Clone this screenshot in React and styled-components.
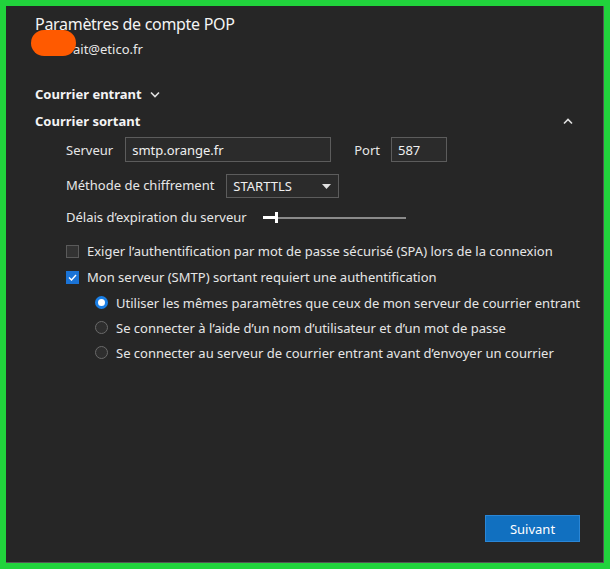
import React, { useState } from 'react';
import styled, { createGlobalStyle } from 'styled-components';

const GlobalStyle = createGlobalStyle`
  html, body {
    margin: 0;
    padding: 0;
    background: #21d33c;
  }
  body {
    font-family: 'Noto Sans', 'Open Sans', sans-serif;
  }
`;

const Frame = styled.div`
  width: 610px;
  height: 569px;
  box-sizing: border-box;
  padding: 6px;
  background: #21d33c;
`;

const Panel = styled.div`
  position: relative;
  height: 100%;
  box-sizing: border-box;
  background: #262626;
  border-right: 1px solid #555;
  border-bottom: 1px solid #555;
  color: #f0f0f0;
  padding: 7px 23px 20px 29px;
  display: flex;
  flex-direction: column;
`;

const Title = styled.h1`
  margin: 0;
  font-size: 16px;
  font-weight: 400;
  letter-spacing: -0.3px;
  line-height: 22px;
  color: #f4f4f4;
`;

const Email = styled.div`
  position: relative;
  margin-top: 5px;
  padding-left: 38px;
  font-size: 13px;
  line-height: 18px;
  color: #e8e8e8;
`;

const Blob = styled.span`
  position: absolute;
  left: -4px;
  top: -10px;
  width: 45px;
  height: 26px;
  border-radius: 13px;
  background: #ff5a00;
`;

const SectionHeader = styled.div`
  display: flex;
  align-items: center;
  gap: 8px;
  margin-top: ${({ first }) => (first ? '27px' : '9px')};
  font-size: 13px;
  font-weight: 700;
  line-height: 18px;
  color: #f4f4f4;
`;

const Spacer = styled.div`
  flex: 1;
`;

const ChevronWrap = styled.span`
  display: flex;
  margin-right: ${({ mr }) => mr || 0}px;
`;

const Body = styled.div`
  display: flex;
  flex-direction: column;
  padding-left: 31px;
  margin-top: 7px;
`;

const Row = styled.div`
  display: flex;
  align-items: center;
  height: 25px;
  margin-bottom: ${({ mb }) => mb || 0}px;
  font-size: 13px;
  color: #e6e6e6;
`;

const Label = styled.span`
  margin-left: ${({ ml }) => ml || 0}px;
  margin-right: ${({ mr }) => mr}px;
  white-space: nowrap;
`;

const TextBox = styled.div`
  box-sizing: border-box;
  width: ${({ w }) => w}px;
  height: 25px;
  border: 1px solid #5c5c5c;
  background: #2b2b2b;
  padding: 0 6px;
  display: flex;
  align-items: center;
  font-size: 13px;
  color: #f0f0f0;
`;

const Select = styled(TextBox)`
  height: 24px;
  margin-top: 3px;
  justify-content: space-between;
  padding-right: 7px;
`;

const Slider = styled.div`
  position: relative;
  width: 143px;
  height: 2px;
  margin-top: 2px;
  background: #8a8a8a;
`;

const SliderFill = styled.div`
  position: absolute;
  left: 0;
  top: -1px;
  height: 3px;
  width: 14px;
  background: #fff;
`;

const Thumb = styled.div`
  position: absolute;
  left: 12px;
  top: -5px;
  width: 3px;
  height: 11px;
  background: #fff;
`;

const CheckRow = styled.label`
  display: flex;
  align-items: center;
  gap: 8px;
  height: ${({ h }) => h || 25}px;
  padding-left: ${({ indent }) => indent || 0}px;
  font-size: 13px;
  color: #e6e6e6;
  white-space: nowrap;
`;

const Box = styled.span`
  flex-shrink: 0;
  box-sizing: border-box;
  width: 13px;
  height: 13px;
  border: 1px solid ${({ checked }) => (checked ? '#1a73d6' : '#5a5a5a')};
  background: ${({ checked }) => (checked ? '#1a73d6' : '#333')};
  display: flex;
  align-items: center;
  justify-content: center;
`;

const Radio = styled.span`
  flex-shrink: 0;
  box-sizing: border-box;
  width: 13px;
  height: 13px;
  border-radius: 50%;
  border: ${({ checked }) => (checked ? '3px solid #1a7fe6' : '1px solid #6a6a6a')};
  background: ${({ checked }) => (checked ? '#fff' : '#2e2e2e')};
`;

const Footer = styled.div`
  display: flex;
  justify-content: flex-end;
  margin-top: auto;
`;

const Button = styled.button`
  width: 95px;
  height: 27px;
  background: #1170c0;
  border: 1px solid #2a86d6;
  color: #fff;
  font-family: inherit;
  font-size: 13px;
  cursor: pointer;
`;

const Chevron = ({ up }) => (
  <svg width="10" height="7" viewBox="0 0 10 7">
    <path
      d={up ? 'M1 5.5 L5 1.5 L9 5.5' : 'M1 1.5 L5 5.5 L9 1.5'}
      fill="none"
      stroke="#e0e0e0"
      strokeWidth="1.6"
    />
  </svg>
);

const radios = [
  'Utiliser les mêmes paramètres que ceux de mon serveur de courrier entrant',
  'Se connecter à l’aide d’un nom d’utilisateur et d’un mot de passe',
  'Se connecter au serveur de courrier entrant avant d’envoyer un courrier',
];

const App = () => {
  const [choice, setChoice] = useState(0);

  return (
    <Frame>
      <GlobalStyle />
      <Panel>
        <Title>Paramètres de compte POP</Title>
        <Email>
          <Blob />
          ait@etico.fr
        </Email>

        <SectionHeader first>
          Courrier entrant
          <ChevronWrap>
            <Chevron />
          </ChevronWrap>
        </SectionHeader>
        <SectionHeader>
          Courrier sortant
          <Spacer />
          <ChevronWrap mr={7}>
            <Chevron up />
          </ChevronWrap>
        </SectionHeader>

        <Body>
          <Row mb={10}>
            <Label mr={12}>Serveur</Label>
            <TextBox w={206}>smtp.orange.fr</TextBox>
            <Label ml={23} mr={11}>Port</Label>
            <TextBox w={56}>587</TextBox>
          </Row>
          <Row mb={7}>
            <Label mr={12}>Méthode de chiffrement</Label>
            <Select w={113}>
              STARTTLS
              <svg width="9" height="5" viewBox="0 0 9 5">
                <path d="M0 0 L9 0 L4.5 5 Z" fill="#e0e0e0" />
              </svg>
            </Select>
          </Row>
          <Row mb={9}>
            <Label mr={16}>Délais d’expiration du serveur</Label>
            <Slider>
              <SliderFill />
              <Thumb />
            </Slider>
          </Row>

          <CheckRow h={26}>
            <Box />
            Exiger l’authentification par mot de passe sécurisé (SPA) lors de la connexion
          </CheckRow>
          <CheckRow h={26}>
            <Box checked>
              <svg width="9" height="7" viewBox="0 0 9 7">
                <path d="M1 3.5 L3.5 6 L8 1" fill="none" stroke="#fff" strokeWidth="1.4" />
              </svg>
            </Box>
            Mon serveur (SMTP) sortant requiert une authentification
          </CheckRow>
          {radios.map((text, i) => (
            <CheckRow key={i} indent={29} onClick={() => setChoice(i)}>
              <Radio checked={choice === i} />
              {text}
            </CheckRow>
          ))}
        </Body>

        <Footer>
          <Button>Suivant</Button>
        </Footer>
      </Panel>
    </Frame>
  );
};

export default App;
